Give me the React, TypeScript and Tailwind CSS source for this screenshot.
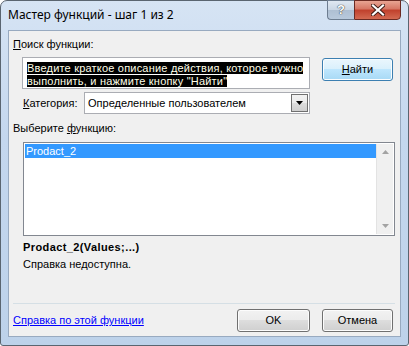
import React from "react";

function WinButton({ children, primary, className }: { children: React.ReactNode; primary?: boolean; className?: string }) {
  return (
    <div
      className={
        "flex h-[23px] items-center justify-center rounded-[3px] border text-[11px] text-black " +
        (primary
          ? "border-[#3c7fb1] bg-[linear-gradient(#eaf6fd_0%,#d9f0fc_50%,#bee6fd_50%,#a7d9f5_100%)] shadow-[inset_0_0_0_1px_#fbfdfe] "
          : "border-[#707070] bg-[linear-gradient(#f2f2f2_0%,#ebebeb_50%,#dddddd_50%,#cfcfcf_100%)] shadow-[inset_0_0_0_1px_#fcfcfc] ") +
        (className ?? "")
      }
    >
      {children}
    </div>
  );
}

export default function App() {
  return (
    <div className="h-[346px] w-[409px] bg-white font-['Liberation_Sans',sans-serif]">
      <div className="flex h-[346px] w-[409px] flex-col rounded-t-[7px] rounded-b-[3px] border border-[#5a6570] bg-[linear-gradient(#d6e4f4_0%,#c4d7ee_40%,#bdd2ea_100%)]">
        {/* title bar */}
        <div className="flex h-[29px] shrink-0 items-start">
          <div className="mt-[6px] ml-[7px] font-['Noto_Sans',sans-serif] text-[12px] leading-[16px] text-black">
            Мастер функций - шаг 1 из 2
          </div>
          <div className="ml-auto mr-[7px] flex h-[20px] -mt-px">
            <div className="flex w-[27px] items-center justify-center rounded-bl-[4px] border border-r-0 border-[#6d7d90] bg-[linear-gradient(#dfe8f2_0%,#c9d6e4_50%,#aebfd2_50%,#b8c9dc_100%)] text-[13px] font-bold text-white [text-shadow:0_0_1px_#333,0_0_1px_#333]">
              ?
            </div>
            <div className="flex w-[47px] items-center justify-center rounded-br-[4px] border border-[#6b2a22] bg-[linear-gradient(#e8a493_0%,#d57563_45%,#c0402c_50%,#d36a52_100%)]">
              <svg width="14" height="12" viewBox="0 0 14 12">
                <path d="M2 1.5 L12 10.5 M12 1.5 L2 10.5" stroke="#3c1a14" strokeWidth="4" strokeLinecap="square" />
                <path d="M2 1.5 L12 10.5 M12 1.5 L2 10.5" stroke="#ffffff" strokeWidth="2.2" strokeLinecap="square" />
              </svg>
            </div>
          </div>
        </div>

        {/* client area */}
        <div className="mx-[7px] flex h-[307px] w-[393px] flex-col border border-[#98aac0] bg-[#f0f0f0] text-[11px] leading-[13px] text-black">
          <div className="mt-[7px] ml-[4px]">
            <span className="underline">П</span>оиск функции:
          </div>

          <div className="mt-[6px] flex items-start">
            <div className="ml-[13px] h-[32px] w-[288px] border border-[#abadb3] bg-white pt-[4px] pl-[4px] tracking-[0.2px]">
              <div>
                <span className="bg-black text-[#ffffe8]">Введите краткое описание действия, которое нужно</span>
              </div>
              <div>
                <span className="bg-black text-[#ffffe8]">выполнить, и нажмите кнопку "Найти"</span>
              </div>
            </div>
            <WinButton primary className="ml-[12px] mt-px w-[71px]">
              <span>
                <span className="underline">Н</span>айти
              </span>
            </WinButton>
          </div>

          <div className="mt-[3px] flex items-center">
            <div className="ml-[14px] w-[61px]">
              <span className="underline">К</span>атегория:
            </div>
            <div className="flex h-[22px] w-[226px] items-center border border-[#abadb3] bg-white">
              <div className="flex-1 pl-[3px]">Определенные пользователем</div>
              <div className="mr-px flex h-[18px] w-[17px] items-center justify-center border border-[#707070] bg-[linear-gradient(#f2f2f2_0%,#ebebeb_50%,#dddddd_50%,#cfcfcf_100%)]">
                <svg width="7" height="4" viewBox="0 0 7 4">
                  <path d="M0 0 H7 L3.5 4 Z" fill="#000" />
                </svg>
              </div>
            </div>
          </div>

          <div className="mt-[8px] ml-[4px]">
            Выберите <span className="underline">ф</span>ункцию:
          </div>

          <div className="mt-[7px] ml-[14px] flex h-[94px] w-[372px] border border-[#828790] bg-white p-px">
            <div className="flex-1">
              <div className="h-[14px] bg-[#3399ff] pl-px leading-[14px] text-white">Prodact_2</div>
            </div>
            <div className="flex w-[17px] flex-col items-center justify-between border-l border-[#e3e3e3] bg-[#f0f0f0] py-[6px]">
              <svg width="7" height="4" viewBox="0 0 7 4">
                <path d="M0 4 H7 L3.5 0 Z" fill="#a3a3a3" />
              </svg>
              <svg width="7" height="4" viewBox="0 0 7 4">
                <path d="M0 0 H7 L3.5 4 Z" fill="#a3a3a3" />
              </svg>
            </div>
          </div>

          <div className="mt-[5px] ml-[14px] font-bold tracking-[0.4px]">Prodact_2(Values;...)</div>
          <div className="mt-[4px] ml-[14px]">Справка недоступна.</div>

          <div className="mt-[32px] ml-[4px] h-px w-[382px] bg-[#d5dfe5]" />

          <div className="mt-[5px] flex items-center">
            <div className="ml-[4px] text-[#0000ff] underline">Справка по этой функции</div>
            <WinButton className="ml-auto w-[73px]">OK</WinButton>
            <WinButton className="ml-[12px] mr-[7px] w-[71px]">Отмена</WinButton>
          </div>
        </div>
      </div>
    </div>
  );
}
